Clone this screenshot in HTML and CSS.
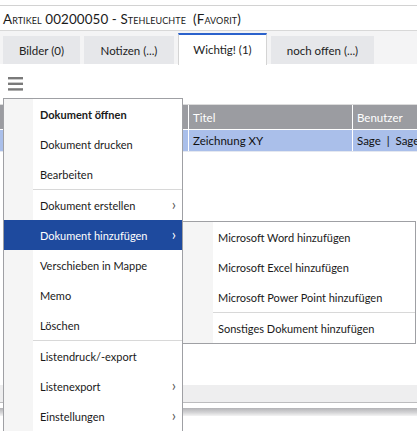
FILE: index.html
```html
<!DOCTYPE html>
<html lang="de">
<head>
<meta charset="utf-8">
<link rel="stylesheet" href="styles.css">
</head>
<body>
<div class="page">
  <div class="topline"></div>
  <div class="title">Artikel 00200050 - Stehleuchte&nbsp; (Favorit)</div>
  <div class="tabbar">
    <div class="tab t1">Bilder (0)</div>
    <div class="tab t2">Notizen (...)</div>
    <div class="tab active t3">Wichtig! (1)</div>
    <div class="tab t4">noch offen (...)</div>
  </div>
  <div class="content">
    <div class="toolbar">
      <svg class="burger" width="15" height="14" viewBox="0 0 15 14"><rect x="0" y="0" width="15" height="2.4" fill="#7a7a7a"/><rect x="0" y="5.6" width="15" height="2.4" fill="#7a7a7a"/><rect x="0" y="11.2" width="15" height="2.4" fill="#7a7a7a"/></svg>
    </div>
    <div class="grid">
      <div class="row head">
        <div class="cell c0"></div>
        <div class="cell c1">Titel</div>
        <div class="cell c2">Benutzer</div>
      </div>
      <div class="row sel">
        <div class="cell c0"></div>
        <div class="cell c1">Zeichnung XY</div>
        <div class="cell c2">Sage&nbsp; |&nbsp; Sage</div>
      </div>
    </div>
    <div class="footer"></div>
    <div class="shadow"></div>

    <div class="menu">
      <div class="item bold"><span>Dokument öffnen</span></div>
      <div class="item"><span>Dokument drucken</span></div>
      <div class="item"><span>Bearbeiten</span></div>
      <div class="sep"></div>
      <div class="item"><span>Dokument erstellen</span><i class="chev">&rsaquo;</i></div>
      <div class="item hl"><span>Dokument hinzufügen</span><i class="chev">&rsaquo;</i></div>
      <div class="item"><span>Verschieben in Mappe</span></div>
      <div class="item"><span>Memo</span></div>
      <div class="item"><span>Löschen</span></div>
      <div class="sep"></div>
      <div class="item"><span>Listendruck/-export</span></div>
      <div class="item"><span>Listenexport</span><i class="chev">&rsaquo;</i></div>
      <div class="item"><span>Einstellungen</span><i class="chev">&rsaquo;</i></div>
    </div>

    <div class="submenu">
      <div class="item"><span>Microsoft Word hinzufügen</span></div>
      <div class="item"><span>Microsoft Excel hinzufügen</span></div>
      <div class="item"><span>Microsoft Power Point hinzufügen</span></div>
      <div class="sep"></div>
      <div class="item"><span>Sonstiges Dokument hinzufügen</span></div>
    </div>
  </div>
</div>
</body>
</html>
```

FILE: styles.css
```css
html, body {
  margin: 0;
  padding: 0;
  background: #ffffff;
}
body {
  font-family: Lato, "Open Sans", "DejaVu Sans", sans-serif;
  font-size: 11px;
  color: #1a1a1a;
}
.page {
  width: 417px;
  height: 431px;
  overflow: hidden;
  position: relative;
}
.topline {
  height: 5px;
  border-bottom: 1px solid #d2d2d2;
}
.title {
  height: 24px;
  line-height: 27px;
  padding-left: 3px;
  font-size: 13.4px;
  font-variant: small-caps;
  color: #1a1a1a;
  letter-spacing: 0.1px;
}
.tabbar {
  border-top: 1px solid #d8d8d8;
  height: 33px;
  background: #f4f4f5;
  display: flex;
  align-items: flex-end;
  gap: 4px;
  padding-left: 3px;
}
.tab {
  height: 28px;
  background: #e6e7ea;
  display: flex;
  align-items: center;
  justify-content: center;
  color: #222;
  font-size: 11.5px;
}
.t1 { width: 77px; }
.t2 { width: 90px; }
.t3 { width: 87px; }
.t4 { width: 103px; }
.tab.active {
  background: #ffffff;
  height: 29px;
  border-top: 2px solid #2b62cc;
  border-left: 1px solid #d4d4d4;
  border-right: 1px solid #d4d4d4;
  margin-bottom: -1px;
  padding-bottom: 1px;
}
.content {
  position: relative;
}
.toolbar {
  height: 40px;
  padding-left: 8px;
  padding-top: 13px;
  box-sizing: border-box;
}
.burger { display: block; }
.grid {
  border-top: 1px solid #dcdcdc;
  font-size: 11.5px;
}
.row {
  display: flex;
  white-space: nowrap;
}
.row.head {
  height: 24px;
  background: #9b9ca1;
  color: #ffffff;
  border-bottom: 1px solid #ffffff;
}
.row.sel {
  height: 21px;
  background: #aabfea;
  color: #111;
  border-bottom: 1px solid #e4e8f0;
}
.cell {
  display: flex;
  align-items: center;
  padding-left: 4px;
  box-sizing: border-box;
  overflow: hidden;
}
.c0 { width: 189px; flex: none; border-right: 1px solid #ffffff; }
.c1 { width: 164px; flex: none; border-right: 1px solid #ffffff; }
.c2 { flex: 1; min-width: 0; }
.footer {
  margin-top: 233px;
  height: 17px;
  background: #eeeeef;
  border-bottom: 1px solid #bcbcbe;
}
.shadow {
  margin-top: 5px;
  height: 8px;
  background: linear-gradient(#b3b3b6, #d6d6d8 60%, #f4f4f4);
}
.menu {
  position: absolute;
  left: 3px;
  top: 34px;
  width: 178px;
  background: linear-gradient(to right, #f5f5f5 29px, #ffffff 29px);
  border: 1px solid #9fa0a4;
}
.submenu {
  position: absolute;
  left: 182px;
  top: 157px;
  width: 232px;
  background: linear-gradient(to right, #f5f5f5 30px, #ffffff 30px);
  border: 1px solid #9fa0a4;
}
.item {
  height: 30px;
  display: flex;
  align-items: center;
  padding-left: 36px;
  padding-right: 8px;
  position: relative;
  color: #1a1a1a;
  white-space: nowrap;
}
.submenu .item {
  padding-left: 35px;
}
.item.bold {
  font-weight: bold;
}
.item.hl {
  background: #1e4a9e;
  color: #ffffff;
}
.chev {
  position: absolute;
  right: 6px;
  top: 5px;
  font-style: normal;
  font-size: 15px;
  color: #555;
}
.item.hl .chev { color: #ffffff; }
.sep {
  height: 1px;
  background: #d8d8d8;
  margin-left: 29px;
}
.submenu .sep {
  margin-left: 30px;
}
```
